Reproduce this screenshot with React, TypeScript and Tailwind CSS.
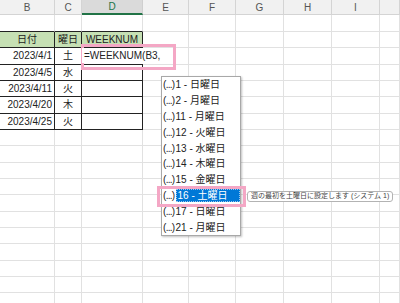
import React from "react";

const W = [
  "w-[55px]",
  "w-[27px]",
  "w-[61px]",
  "w-[46px]",
  "w-[47px]",
  "w-[48px]",
  "w-[48px]",
  "w-[48px]",
  "w-[20px]",
];
const LETTERS = ["B", "C", "D", "E", "F", "G", "H", "I", ""];

const DATA = [
  { date: "2023/4/1", day: "土" },
  { date: "2023/4/5", day: "水" },
  { date: "2023/4/11", day: "火" },
  { date: "2023/4/20", day: "木" },
  { date: "2023/4/25", day: "火" },
];

const OPTIONS = [
  "1 - 日曜日",
  "2 - 月曜日",
  "11 - 月曜日",
  "12 - 火曜日",
  "13 - 水曜日",
  "14 - 木曜日",
  "15 - 金曜日",
  "16 - 土曜日",
  "17 - 日曜日",
  "21 - 月曜日",
];

const GRID = "border-[#e1e1e1]";

function PlainCells({ from, tall }: { from: number; tall?: boolean }) {
  return (
    <>
      {W.slice(from).map((w, i) => (
        <div
          key={i}
          className={`${w} shrink-0 border-r border-b ${GRID} ${tall ? "h-[17px]" : "h-[16.33px]"}`}
        />
      ))}
    </>
  );
}

export default function App() {
  return (
    <div
      className="relative w-[400px] h-[303px] overflow-hidden bg-white text-[10px] text-[#222]"
      style={{ fontFamily: '"Liberation Sans", "Noto Sans CJK JP", sans-serif' }}
    >
      {/* column headers */}
      <div className="flex h-[15px]">
        {W.map((w, i) =>
          i === 2 ? (
            <div
              key={i}
              className={`${w} shrink-0 flex items-center justify-center bg-[#dadada] border-r border-[#cfcfcf] border-b-2 border-b-[#217346] text-[#217346]`}
            >
              {LETTERS[i]}
            </div>
          ) : (
            <div
              key={i}
              className={`${w} shrink-0 flex items-center justify-center bg-[#f1f1f1] border-r border-b border-[#d4d4d4] text-[#555]`}
            >
              {LETTERS[i]}
            </div>
          )
        )}
      </div>

      {/* row 1 */}
      <div className="flex">
        <div className={`${W[0]} shrink-0 h-[17px] border-r ${GRID} border-b border-b-[#222]`} />
        <div className={`${W[1]} shrink-0 h-[17px] border-r ${GRID} border-b border-b-[#222]`} />
        <div className={`${W[2]} shrink-0 h-[17px] border-r ${GRID} border-b border-b-[#222]`} />
        <PlainCells from={3} tall />
      </div>

      {/* table header */}
      <div className="flex">
        <div className={`${W[0]} shrink-0 h-[16.33px] flex items-center justify-center bg-[#c6e0b4] border-r border-b border-[#222]`}>
          日付
        </div>
        <div className={`${W[1]} shrink-0 h-[16.33px] flex items-center justify-center bg-[#c6e0b4] border-r border-b border-[#222]`}>
          曜日
        </div>
        <div className={`${W[2]} shrink-0 h-[16.33px] flex items-center justify-center bg-[#c6e0b4] border-r border-b border-[#222]`}>
          WEEKNUM
        </div>
        <PlainCells from={3} />
      </div>

      {DATA.map((r, idx) => (
        <div key={r.date} className="flex">
          <div className={`${W[0]} shrink-0 h-[16.33px] flex items-center justify-end pr-[2px] border-r border-b border-[#222]`}>
            {r.date}
          </div>
          <div className={`${W[1]} shrink-0 h-[16.33px] flex items-center justify-center border-r border-b border-[#222]`}>
            {r.day}
          </div>
          <div className={`${W[2]} shrink-0 h-[16.33px] relative border-r border-b border-[#222]`}>
            {idx === 0 && (
              <span className="absolute left-0 top-0 z-10 h-[15px] pl-[2px] pr-[6px] flex items-center whitespace-nowrap bg-white">
                =WEEKNUM(B3,
              </span>
            )}
          </div>
          <PlainCells from={3} />
        </div>
      ))}

      {Array.from({ length: 11 }).map((_, i) => (
        <div key={i} className="flex">
          <PlainCells from={0} />
        </div>
      ))}

      {/* active cell underline + fill handle */}
      <div className="absolute left-[83px] top-[61px] w-[59px] h-[2px] bg-[#217346]" />
      <div className="absolute left-[140px] top-[60px] w-[4px] h-[4px] bg-[#217346] border border-white" />

      {/* autocomplete list */}
      <div className="absolute left-[161px] top-[76px] w-[80px] bg-white border border-[#a8a8a8] shadow-[1px_1px_2px_rgba(0,0,0,0.25)]">
        {OPTIONS.map((o, i) => (
          <div key={o} className="h-[15.8px] flex items-center pl-[1px] whitespace-nowrap">
            <span className="tracking-[-0.7px] mr-[1px]">(...)</span>
            {i === 7 ? (
              <span className="flex-1 h-[13px] flex items-center bg-[#0078d7] text-white pl-[1px] border border-dotted border-[#9cc7ee]">
                {o}
              </span>
            ) : (
              <span>{o}</span>
            )}
          </div>
        ))}
      </div>

      {/* tooltip */}
      <div className="absolute left-[247px] top-[191px] w-[146px] h-[11px] flex items-center px-[3px] whitespace-nowrap rounded-[3px] border border-[#b3b3b3] bg-white text-[7px] text-[#444]">
        週の最初を土曜日に設定します (システム 1)
      </div>

      {/* annotation frames */}
      <div className="absolute left-[81px] top-[44px] w-[95px] h-[26px] border-[3px] border-[#f4a7c5]" />
      <div className="absolute left-[157px] top-[186px] w-[89px] h-[21px] border-[3px] border-[#f4a7c5]" />
    </div>
  );
}
